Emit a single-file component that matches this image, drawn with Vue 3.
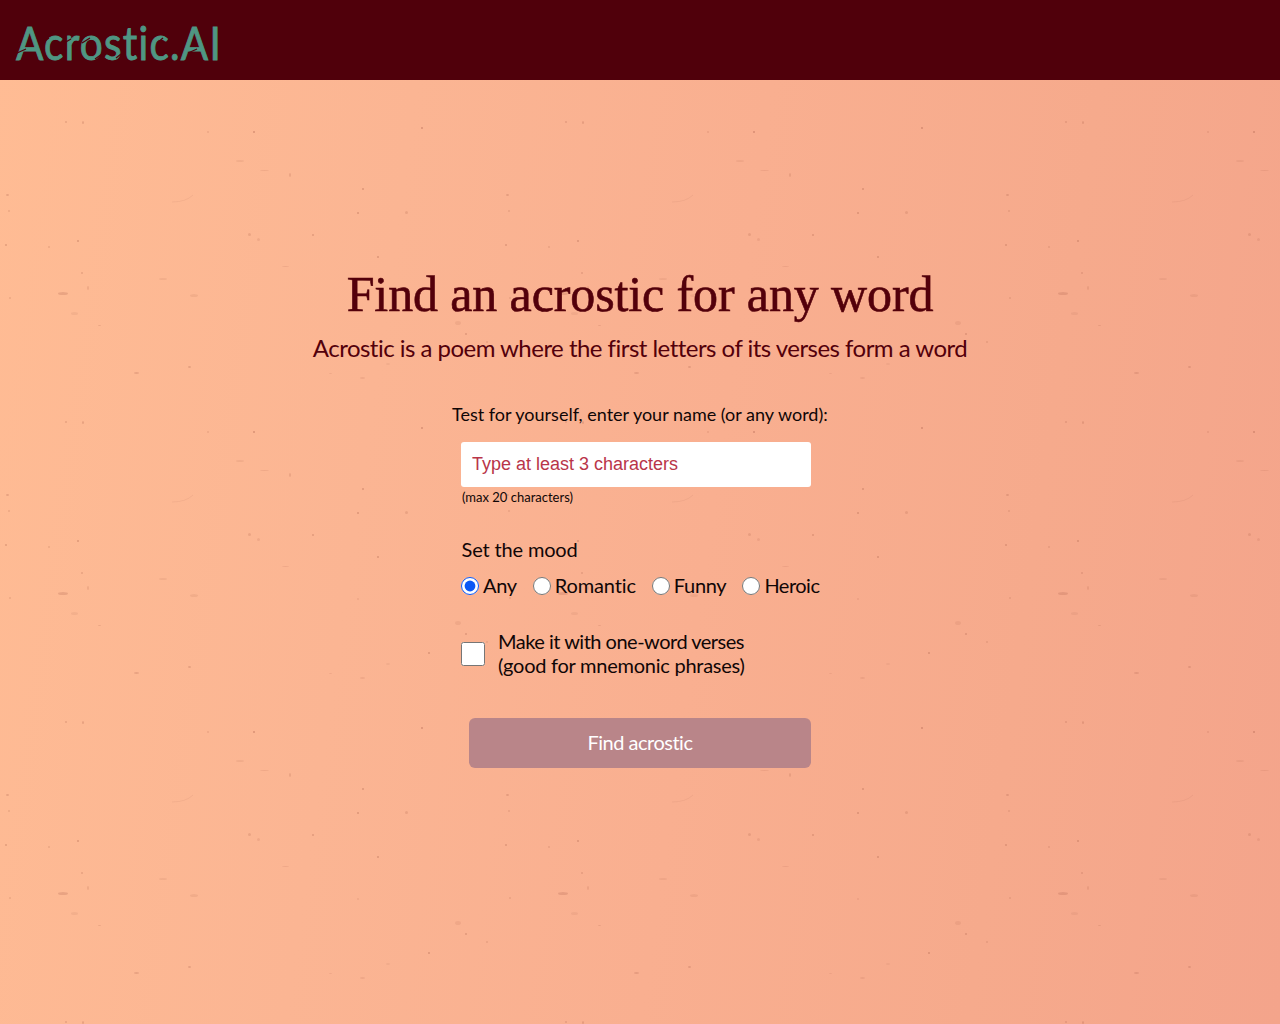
<script setup>

import { ref } from 'vue'

var word = ref('')
var mood = ref('any')
var oneWord = ref(false)

var moods = [
    { value: 'any', label: 'Any' },
    { value: 'romantic', label: 'Romantic' },
    { value: 'funny', label: 'Funny' },
    { value: 'heroic', label: 'Heroic' }
]

// paper flecks: x, y, width, height, opacity inside one 500x300 tile
var flecks = [
    [58, 292, 10, 3, 0.22], [65, 121, 2, 2, 0.25], [82, 121, 2, 3, 0.25],
    [207, 131, 2, 2, 0.18], [253, 131, 2, 2, 0.4], [421, 127, 2, 2, 0.4],
    [236, 160, 8, 2, 0.12], [260, 170, 9, 1, 0.15], [289, 173, 2, 4, 0.2],
    [6, 194, 3, 2, 0.25], [8, 210, 2, 2, 0.2], [5, 244, 2, 2, 0.3],
    [48, 246, 2, 2, 0.2], [77, 240, 2, 2, 0.35], [81, 272, 2, 2, 0.25],
    [87, 286, 2, 4, 0.18], [9, 297, 2, 2, 0.2], [190, 294, 8, 3, 0.12],
    [159, 278, 8, 2, 0.12], [248, 233, 3, 3, 0.2], [257, 238, 3, 3, 0.15],
    [188, 66, 3, 2, 0.25], [134, 72, 5, 2, 0.22], [98, 25, 3, 1, 0.2],
    [71, 12, 7, 3, 0.1], [362, 188, 2, 2, 0.35], [357, 212, 2, 2, 0.35],
    [405, 211, 3, 3, 0.2], [312, 234, 2, 2, 0.3], [377, 256, 2, 2, 0.35],
    [282, 266, 7, 1, 0.15], [357, 298, 2, 2, 0.15], [455, 21, 6, 4, 0.12],
    [465, 33, 2, 2, 0.3], [428, 52, 2, 2, 0.35], [360, 77, 5, 2, 0.15],
    [329, 73, 3, 1, 0.15], [486, 41, 2, 2, 0.2], [386, 63, 4, 2, 0.1]
]
</script>

<template>
    <div class="page">
        <svg class="paper" width="1280" height="1024" aria-hidden="true">
            <defs>
                <pattern id="flecks" width="500" height="300" patternUnits="userSpaceOnUse">
                    <ellipse v-for="(f, i) in flecks" :key="i" :cx="f[0] + f[2] / 2" :cy="f[1] + f[3] / 2" :rx="f[2] / 2" :ry="f[3] / 2" :opacity="f[4]" fill="#a45843" />
                    <path d="M172 202Q186 202 193 195" fill="none" stroke="#a45843" opacity="0.1" />
                </pattern>
            </defs>
            <rect width="1280" height="1024" fill="url(#flecks)" />
        </svg>
        <header class="header">
            <div class="logo">Acrostic.AI</div>
            <!-- stencil cuts of the logo letters -->
            <svg class="cuts" width="240" height="80" aria-hidden="true">
                <path d="M17 53L26 49M42 43L49 38M64 43L71 39M82 43L90 38M95 59L102 54M116 58L121 54M157 43L163 38M188 53L197 49" />
            </svg>
        </header>
        <main class="main">
            <h1 class="title">Find an acrostic for any word</h1>
            <p class="subtitle">Acrostic is a poem where the first letters of its verses form a word</p>
            <form class="form" @submit.prevent>
                <label class="label" for="word">Test for yourself, enter your name (or any word):</label>
                <input id="word" class="word" v-model="word" type="text" maxlength="20" placeholder="Type at least 3 characters">
                <div class="hint">(max 20 characters)</div>
                <div class="mood__title">Set the mood</div>
                <div class="moods">
                    <label v-for="m in moods" :key="m.value" class="mood" :class="m.value">
                        <input type="radio" name="mood" :value="m.value" v-model="mood"><span>{{ m.label }}</span>
                    </label>
                </div>
                <label class="mnemonic">
                    <input type="checkbox" v-model="oneWord">
                    <span><span class="line1">Make it with one-word verses</span><br><span class="line2">(good for mnemonic phrases)</span></span>
                </label>
                <button class="submit" type="submit" :disabled="word.length < 3">Find acrostic</button>
            </form>
        </main>
    </div>
</template>

<style>
body{
    margin: 0;
}
</style>

<style scoped>
.page{
    position: relative;
    height: 1024px;
    overflow: hidden;
    font-family: Lato, sans-serif;
    font-variant-ligatures: none;
    color: #100606;
    background: linear-gradient(98deg, #ffbc94 0%, #fbb593 30%, #f9af90 55%, #f6aa8c 78%, #f4a48b 100%);
}
.paper{
    position: absolute;
    top: 0;
    left: 0;
}
.header{
    position: relative;
    display: flex;
    box-sizing: border-box;
    height: 80px;
    padding: 15px 16px;
    background-color: #50000b;
}
.logo{
    color: #4f9683;
    font-size: 46px;
    line-height: 56px;
    letter-spacing: 1.4px;
    white-space: nowrap;
    transform: scaleX(0.88);
    transform-origin: left;
    -webkit-text-stroke: 0.9px #4f9683;
}
.cuts{
    position: absolute;
    top: 0;
    left: 0;
    fill: none;
    stroke: #50000b;
    stroke-width: 1.3;
}
.main{
    position: relative;
    display: flex;
    flex-direction: column;
    align-items: center;
    padding-top: 184px;
}
.title{
    margin: 0;
    color: #53000b;
    font: 400 50px/60px "Liberation Serif", serif;
    letter-spacing: -0.12px;
    white-space: nowrap;
    -webkit-text-stroke: 0.6px #53000b;
}
.subtitle{
    margin: 9px 0 0;
    color: #53000b;
    font-size: 24px;
    line-height: 30px;
    letter-spacing: -0.52px;
    white-space: nowrap;
}
.form{
    display: flex;
    flex-direction: column;
    align-items: flex-start;
    width: 358px;
    margin: 36px 0 0;
    font-size: 20px;
    line-height: 24px;
    white-space: nowrap;
}
.label{
    margin-left: -9px;
    font-size: 18px;
    line-height: 30px;
}
.word{
    box-sizing: border-box;
    width: 350px;
    height: 45px;
    margin-top: 13px;
    padding: 0 11px 1px;
    border: 0;
    border-radius: 3px;
    background-color: #fff;
    font: 18px "Liberation Sans", sans-serif;
}
.word::placeholder{
    color: #b93549;
}
.hint{
    margin: 2px 0 0 1px;
    font-size: 13px;
    line-height: 16px;
}
.mood__title{
    margin: 32px 0 0 0.5px;
    letter-spacing: -0.15px;
}
.moods{
    display: flex;
    gap: 16px;
    margin-top: 12px;
    letter-spacing: -0.3px;
}
.mood{
    display: flex;
    align-items: center;
    gap: 4px;
}
.romantic{
    letter-spacing: -0.15px;
}
.heroic{
    letter-spacing: -0.5px;
}
.mood input{
    width: 18px;
    height: 18px;
    margin: 2px 0 0;
    accent-color: #0b57f5;
}
.mnemonic{
    display: flex;
    align-items: center;
    gap: 13px;
    margin-top: 32px;
}
.mnemonic input{
    width: 24px;
    height: 24px;
    margin: 2px 0 0;
}
.line1{
    letter-spacing: -0.5px;
}
.line2{
    letter-spacing: -0.25px;
}
.submit{
    width: 342px;
    height: 50px;
    margin: 41px 0 0 8px;
    padding: 0 0 2px;
    border: 0;
    border-radius: 6px;
    background-color: #b98589;
    color: #fff;
    font: 20px Lato, sans-serif;
    letter-spacing: -0.5px;
}
</style>
